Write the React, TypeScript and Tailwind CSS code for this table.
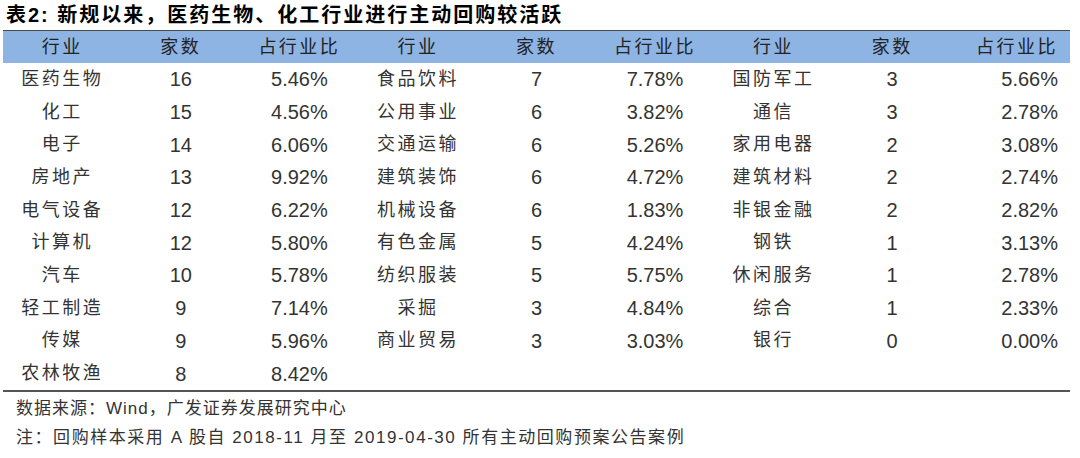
import React from "react";

type Row = [string, string, string];

const left: Row[] = [
  ["医药生物", "16", "5.46%"],
  ["化工", "15", "4.56%"],
  ["电子", "14", "6.06%"],
  ["房地产", "13", "9.92%"],
  ["电气设备", "12", "6.22%"],
  ["计算机", "12", "5.80%"],
  ["汽车", "10", "5.78%"],
  ["轻工制造", "9", "7.14%"],
  ["传媒", "9", "5.96%"],
  ["农林牧渔", "8", "8.42%"],
];

const middle: Row[] = [
  ["食品饮料", "7", "7.78%"],
  ["公用事业", "6", "3.82%"],
  ["交通运输", "6", "5.26%"],
  ["建筑装饰", "6", "4.72%"],
  ["机械设备", "6", "1.83%"],
  ["有色金属", "5", "4.24%"],
  ["纺织服装", "5", "5.75%"],
  ["采掘", "3", "4.84%"],
  ["商业贸易", "3", "3.03%"],
];

const right: Row[] = [
  ["国防军工", "3", "5.66%"],
  ["通信", "3", "2.78%"],
  ["家用电器", "2", "3.08%"],
  ["建筑材料", "2", "2.74%"],
  ["非银金融", "2", "2.82%"],
  ["钢铁", "1", "3.13%"],
  ["休闲服务", "1", "2.78%"],
  ["综合", "1", "2.33%"],
  ["银行", "0", "0.00%"],
];

const font = { fontFamily: '"Liberation Sans", "Noto Sans CJK SC", sans-serif' };

const heads = ["行业", "家数", "占行业比", "行业", "家数", "占行业比", "行业", "家数", "占行业比"];

function Name({ text }: { text?: string }) {
  return (
    <div className="flex items-center justify-center text-[18px] tracking-[2.5px] text-[#333]">
      {text}
    </div>
  );
}

function Num({ text, alignRight }: { text?: string; alignRight?: boolean }) {
  return (
    <div
      className={
        alignRight
          ? "flex items-center justify-end pr-3 text-[20px] text-[#333]"
          : "flex items-center justify-center text-[20px] text-[#333]"
      }
    >
      {text}
    </div>
  );
}

export default function App() {
  const rows = left.map((l, i) => [l, middle[i], right[i]] as (Row | undefined)[]);

  return (
    <div className="w-[1080px] h-[458px] bg-white overflow-hidden" style={font}>
      <div className="h-[30px] pl-[6px] flex items-center text-[20px] font-bold text-black tracking-[2px]">
        表2: 新规以来，医药生物、化工行业进行主动回购较活跃
      </div>

      <div className="ml-[3px] w-[1067px]">
        <div className="grid grid-cols-9 h-[33px] bg-[#8db4e3] border-t border-[#4a4a4a]">
          {heads.map((h, i) => (
            <div
              key={i}
              className={
                i === 8
                  ? "flex items-center justify-end pr-3 text-[18px] tracking-[2.5px] text-[#222]"
                  : "flex items-center justify-center text-[18px] tracking-[2.5px] text-[#222]"
              }
            >
              {h}
            </div>
          ))}
        </div>

        <div className="border-b-2 border-[#555]">
          {rows.map((r, i) => (
            <div key={i} className="grid grid-cols-9 h-[32.7px]">
              <Name text={r[0]?.[0]} />
              <Num text={r[0]?.[1]} />
              <Num text={r[0]?.[2]} />
              <Name text={r[1]?.[0]} />
              <Num text={r[1]?.[1]} />
              <Num text={r[1]?.[2]} />
              <Name text={r[2]?.[0]} />
              <Num text={r[2]?.[1]} />
              <Num text={r[2]?.[2]} alignRight />
            </div>
          ))}
        </div>
      </div>

      <div className="pl-[16px] pt-[2px] text-[17px] text-[#333] leading-[29px]">
        <div className="tracking-[1px]">数据来源：Wind，广发证券发展研究中心</div>
        <div className="tracking-[1.55px]">
          注：回购样本采用 A 股自 2018-11 月至 2019-04-30 所有主动回购预案公告案例
        </div>
      </div>
    </div>
  );
}
